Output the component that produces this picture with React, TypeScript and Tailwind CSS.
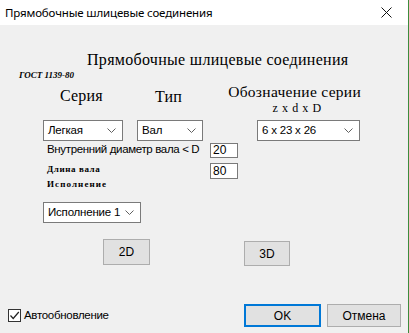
import React from "react";

function Chevron() {
  return (
    <svg width="9" height="5" viewBox="0 0 9 5" className="shrink-0">
      <path d="M0.5 0.5 L4.5 4.5 L8.5 0.5" fill="none" stroke="#606060" strokeWidth="1" />
    </svg>
  );
}

function Select({ label, w }: { label: string; w: string }) {
  return (
    <div
      className={`${w} h-[21px] bg-white border border-[#7a7a7a] flex items-center justify-between pl-[4px] pr-[6px] text-[11.5px] text-black font-['Liberation_Sans',sans-serif] whitespace-nowrap`}
    >
      <span className="leading-none tracking-[-0.2px]">{label}</span>
      <Chevron />
    </div>
  );
}

export default function App() {
  const serif = "font-['Liberation_Serif',serif]";
  const sans = "font-['Liberation_Sans',sans-serif]";
  return (
    <div className="w-[409px] h-[333px] bg-[#f0f0f0] flex flex-col border-r border-[#3c8c3c] overflow-hidden relative whitespace-nowrap">
      {/* title bar */}
      <div className="h-[25px] bg-white flex items-center justify-between shrink-0">
        <span className="ml-[5px] text-[11.5px] text-black font-['Noto_Sans',sans-serif] leading-none tracking-[-0.15px]">
          Прямобочные шлицевые соединения
        </span>
        <svg width="11" height="11" viewBox="0 0 11 11" className="mr-[16px]">
          <path d="M0.5 0.5 L10.5 10.5 M10.5 0.5 L0.5 10.5" stroke="#111" strokeWidth="1" />
        </svg>
      </div>

      {/* heading */}
      <div className={`mt-[26px] ml-[87px] h-[18px] leading-[18px] text-[16px] text-black ${serif} tracking-[0.3px]`}>
        Прямобочные шлицевые соединения
      </div>

      {/* GOST */}
      <div className={`mt-[1px] ml-[19px] h-[11px] leading-[11px] text-[9px] italic font-bold text-black ${serif}`}>
        ГОСТ 1139-80
      </div>

      {/* labels row */}
      <div className={`flex items-start h-[34px] text-black ${serif}`}>
        <div className="ml-[60px] w-[44px] mt-[6px] text-[16px] leading-[18px] tracking-[0.2px]">Серия</div>
        <div className="ml-[51px] mt-[7px] text-[16px] leading-[18px] tracking-[0.2px]">Тип</div>
        <div className="ml-[44px] mt-[2px] flex flex-col items-center w-[137px]">
          <div className="text-[15.5px] leading-[18px] tracking-[0.3px]">Обозначение серии</div>
          <div className="text-[12px] leading-[14px] ml-[5px] tracking-[0.6px]">z x d x D</div>
        </div>
      </div>

      {/* selects row */}
      <div className="mt-[5px] flex items-start">
        <div className="ml-[43px]"><Select label="Легкая" w="w-[80px]" /></div>
        <div className="ml-[14px]"><Select label="Вал" w="w-[66px]" /></div>
        <div className="ml-[54px]"><Select label="6 x 23 x 26" w="w-[103px]" /></div>
      </div>

      {/* inner diameter */}
      <div className="mt-[1px] flex items-center h-[16px]">
        <div className={`ml-[47px] w-[163px] text-[11.5px] leading-none text-black ${sans} tracking-[-0.35px]`}>
          Внутренний диаметр вала &lt; D
        </div>
        <div className={`w-[28px] h-[15px] bg-white border border-[#7a7a7a] text-[12px] leading-[13px] pl-[2px] text-black ${sans}`}>
          20
        </div>
      </div>

      {/* length */}
      <div className="mt-[5px] flex items-start h-[16px]">
        <div className={`ml-[47px] w-[163px] mt-[1px] text-[9px] leading-[11px] font-bold text-black ${serif} tracking-[0.6px]`}>
          Длина вала
        </div>
        <div className={`w-[28px] h-[16px] bg-white border border-[#7a7a7a] text-[12px] leading-[14px] pl-[2px] text-black ${sans}`}>
          80
        </div>
      </div>

      <div className={`mt-[0px] ml-[47px] text-[9px] leading-[11px] font-bold text-black ${serif} tracking-[1.1px]`}>
        Исполнение
      </div>

      <div className="mt-[12px] ml-[43px]">
        <Select label="Исполнение 1" w="w-[98px]" />
      </div>

      {/* 2D / 3D */}
      <div className={`mt-[16px] flex items-start text-[12px] text-black ${sans}`}>
        <div className="ml-[103px] w-[47px] h-[26px] bg-[#e1e1e1] border border-[#adadad] flex items-center justify-center">
          2D
        </div>
        <div className="ml-[94px] mt-[2px] w-[46px] h-[25px] bg-[#e1e1e1] border border-[#adadad] flex items-center justify-center">
          3D
        </div>
      </div>

      <div className="flex-1" />

      {/* footer */}
      <div className={`mb-[6px] flex items-center h-[23px] text-[12px] text-black ${sans}`}>
        <div className="ml-[8px] w-[13px] h-[13px] bg-white border border-[#333] flex items-center justify-center">
          <svg width="11" height="11" viewBox="0 0 11 11">
            <path d="M1.5 5.5 L4.2 8.5 L9.8 2" fill="none" stroke="#222" strokeWidth="1.2" />
          </svg>
        </div>
        <span className="ml-[3px] text-[11.5px] tracking-[-0.3px]">Автообновление</span>
        <div className="flex-1" />
        <div className="w-[77px] h-[23px] bg-[#e1e1e1] border-2 border-[#0078d7] flex items-center justify-center">
          OK
        </div>
        <div className="ml-[6px] mr-[7px] w-[74px] h-[23px] bg-[#e1e1e1] border border-[#adadad] flex items-center justify-center">
          Отмена
        </div>
      </div>
    </div>
  );
}
